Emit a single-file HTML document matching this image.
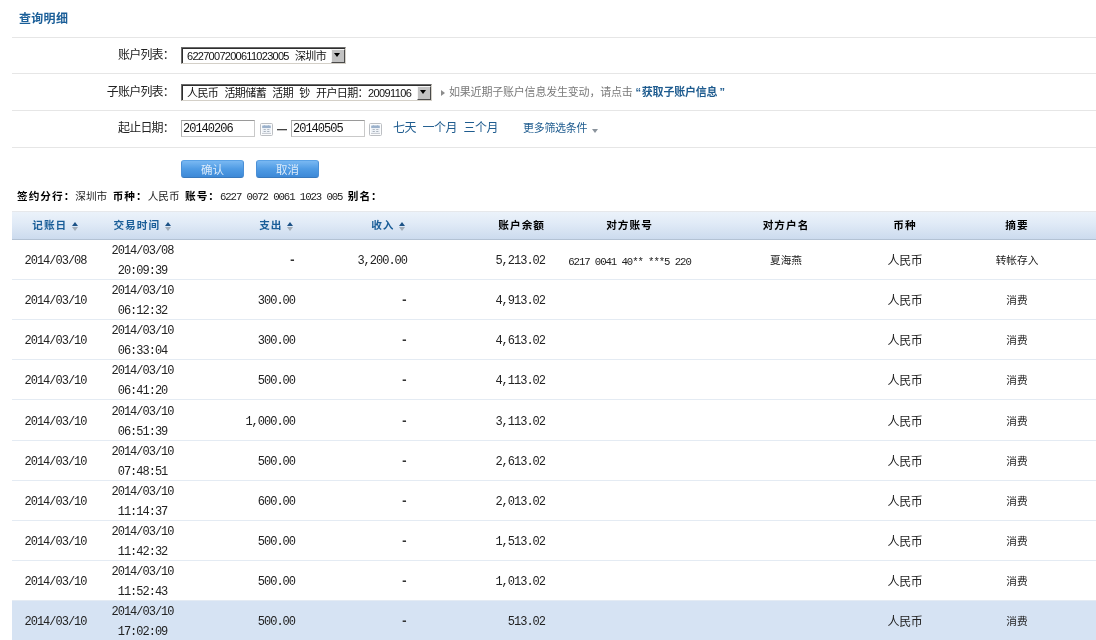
<!DOCTYPE html>
<html lang="zh-CN">
<head>
<meta charset="utf-8">
<title>查询明细</title>
<style>
html,body{margin:0;padding:0;background:#fff;}
body{will-change:transform;width:1096px;height:640px;overflow:hidden;position:relative;
  font-family:"Liberation Sans","Noto Sans CJK SC",sans-serif;font-size:12px;color:#222;}
.abs{position:absolute;white-space:nowrap;}
h1.title{position:absolute;left:19px;top:10px;letter-spacing:0.3px;margin:0;font-size:12px;line-height:18px;font-weight:bold;color:#1a5e98;}
.hr{position:absolute;left:12px;right:0;height:1px;background:#e6e6e6;}
.lbl{position:absolute;left:60px;width:114px;text-align:right;font-size:12px;line-height:18px;color:#222;letter-spacing:-0.8px;}
.sel{position:absolute;box-sizing:border-box;height:17px;background:#fff;
  border:1px solid;border-color:#6a6a6a #d4d0c8 #d4d0c8 #6a6a6a;}
.sel .in{position:absolute;left:0;top:0;right:0;bottom:0;border:0 solid #2e2e2e;border-width:1px 0 0 1px;}
.sel .tx{position:absolute;left:4px;top:0;line-height:14px;font-size:11px;color:#111;white-space:nowrap;letter-spacing:-0.65px;word-spacing:2.5px;}
.sel .btn{position:absolute;right:0;top:0;bottom:0;width:14px;box-sizing:border-box;background:#c2c2c2;
  border:1px solid;border-color:#f6f6f6 #4a4a4a #4a4a4a #f6f6f6;}
.sel .btn:after{content:"";position:absolute;left:2px;top:3px;border:3.5px solid transparent;border-top:4px solid #000;border-bottom:0;}
input.dt{position:absolute;box-sizing:border-box;width:74px;height:17px;top:120px;margin:0;padding:0 0 0 1px;
  border:1px solid;border-color:#9a9a9a #c9c9c9 #c9c9c9 #b0b0b0;background:#fff;outline:0;
  font-family:"Liberation Mono",monospace;font-size:12px;letter-spacing:-1px;color:#111;line-height:15px;}
.cal{position:absolute;top:123px;width:13px;height:13px;}
a{color:#1f5c8f;text-decoration:none;}
.btnb{position:absolute;top:160px;width:63px;height:18px;box-sizing:border-box;border:1px solid #4a90d6;border-radius:3px;
  background:linear-gradient(#79b8f2,#4f9be4 50%,#3d89d7);color:#dcebfa;font-size:11.5px;line-height:16px;text-align:center;
  padding:0.5px 0 0 0;border-color:#5aa2e6 #4a8fd6 #3878bc #4a8fd6;margin:0;font-family:inherit;}
.info{position:absolute;left:17px;top:187px;font-size:10.67px;line-height:18px;color:#222;white-space:nowrap;word-spacing:2.4px;}
.info b{color:#000;letter-spacing:1px;}
.info .n{font-family:"Liberation Mono",monospace;letter-spacing:-1.07px;word-spacing:0;}
table.grid{position:absolute;left:12px;top:211px;border-collapse:separate;border-spacing:0;table-layout:fixed;width:1200px;}
table.grid th{height:25px;padding:0 0 2px 0;background:linear-gradient(#ebf2fa,#e1ebf7 40%,#ccdbee);border-top:1px solid #e6e8eb;border-bottom:1px solid #b3c2d4;
  font-size:10.67px;font-weight:bold;letter-spacing:1px;color:#000;text-align:center;white-space:nowrap;}
table.grid th.s{color:#1a5e98;}
table.grid td{height:38px;padding:2px 0 0 0;box-shadow:inset 0 -1px 0 #e4ebf3;text-align:center;line-height:20px;
  font-family:"Liberation Mono","Noto Sans CJK SC",monospace;font-size:12px;letter-spacing:-1px;color:#222;white-space:nowrap;}
table.grid tr.t td{height:39px;}
table.grid td.tm{padding:0;height:40px;}
table.grid td.tm div{position:relative;top:1px;}
table.grid tr.t td.tm{height:41px;}
table.grid .r{text-align:right;}
table.grid td.d{font-weight:bold;color:#333;}
table.grid th.s.r{padding-right:1px;}
table.grid td.c{font-family:"Liberation Sans","Noto Sans CJK SC",sans-serif;font-size:10.67px;letter-spacing:0;padding-top:0;height:40px;}
table.grid tr.t td.c{height:41px;}
table.grid td.cy{font-size:12px;letter-spacing:-0.4px;padding-top:2px;height:38px;}
table.grid tr.t td.cy{height:39px;}
table.grid td.ac{font-size:10.67px;letter-spacing:-1.07px;padding-top:3px;height:37px;}
table.grid tr.t td.ac{height:38px;}
table.grid tr.hl td{background:#d6e3f3;box-shadow:none;}
.sort{display:inline-block;width:7px;height:9.5px;margin-left:4.5px;position:relative;vertical-align:-2px;}
.sort:before{content:"";position:absolute;left:0;top:0;border:3.5px solid transparent;border-bottom:4px solid #1c5286;border-top:0;}
.sort:after{content:"";position:absolute;left:0;top:5.5px;border:3.5px solid transparent;border-top:4px solid #a3adb8;border-bottom:0;}
</style>
</head>
<body>
<h1 class="title">查询明细</h1>
<div class="hr" style="top:37px"></div>
<div class="hr" style="top:73px"></div>
<div class="hr" style="top:110px"></div>
<div class="hr" style="top:147px"></div>

<label class="lbl" style="top:46px">账户列表：</label>
<div class="sel" style="left:181px;top:47px;width:165px"><div class="in"><span class="tx" style="letter-spacing:-0.72px;word-spacing:4px">6227007200611023005 深圳市</span><span class="btn"></span></div></div>

<label class="lbl" style="top:83px">子账户列表：</label>
<div class="sel" style="left:181px;top:83.5px;width:251px"><div class="in"><span class="tx" style="letter-spacing:-0.6px;word-spacing:3.8px">人民币 活期储蓄 活期 钞 开户日期：20091106</span><span class="btn"></span></div></div>
<div class="abs" style="left:441px;top:83px;font-size:11px;line-height:18px;color:#7a7a7a;letter-spacing:-0.2px"><span style="display:inline-block;width:0;height:0;border:3px solid transparent;border-left:4px solid #8c8c8c;border-right:0;margin-right:4px;vertical-align:0px"></span>如果近期子账户信息发生变动，请点击 <a href="#" style="font-weight:bold">“<span style="margin:0 2px 0 1px">获取子账户信息</span>”</a></div>

<label class="lbl" style="top:119px">起止日期：</label>
<input class="dt" style="left:181px" type="text" value="20140206">
<svg class="cal" style="left:260px" viewBox="0 0 13 13"><rect x="0.5" y="0.5" width="12" height="12" rx="1" fill="#eef2f7" stroke="#bcbfc3"/><rect x="1.5" y="1.5" width="10" height="10" fill="none" stroke="#fbfcfd"/><path d="M2.2 5 V3.4 Q2.2 2.6 3 2.6 H4 L4.6 1.9 L5.2 2.6 H7.8 L8.4 1.9 L9 2.6 H10 Q10.8 2.6 10.8 3.4 V5 Z" fill="#9bb1cb"/><rect x="3.6" y="6.1" width="2.2" height="0.9" fill="#aab3bd"/><rect x="7.2" y="6.1" width="2.2" height="0.9" fill="#aab3bd"/><rect x="3.6" y="8.1" width="2.2" height="0.9" fill="#a2acb7"/><rect x="7.2" y="8.1" width="2.2" height="0.9" fill="#a2acb7"/><rect x="2" y="10.1" width="9" height="0.9" fill="#c3c8ce"/></svg>
<div class="abs" style="left:277px;top:129px;width:9.5px;height:1px;background:#444;box-shadow:0 1px 0 #c4c4c4"></div>
<input class="dt" style="left:291px" type="text" value="20140505">
<svg class="cal" style="left:369px" viewBox="0 0 13 13"><rect x="0.5" y="0.5" width="12" height="12" rx="1" fill="#eef2f7" stroke="#bcbfc3"/><rect x="1.5" y="1.5" width="10" height="10" fill="none" stroke="#fbfcfd"/><path d="M2.2 5 V3.4 Q2.2 2.6 3 2.6 H4 L4.6 1.9 L5.2 2.6 H7.8 L8.4 1.9 L9 2.6 H10 Q10.8 2.6 10.8 3.4 V5 Z" fill="#9bb1cb"/><rect x="3.6" y="6.1" width="2.2" height="0.9" fill="#aab3bd"/><rect x="7.2" y="6.1" width="2.2" height="0.9" fill="#aab3bd"/><rect x="3.6" y="8.1" width="2.2" height="0.9" fill="#a2acb7"/><rect x="7.2" y="8.1" width="2.2" height="0.9" fill="#a2acb7"/><rect x="2" y="10.1" width="9" height="0.9" fill="#c3c8ce"/></svg>
<div class="abs" style="left:393px;top:119px;line-height:18px;font-size:12px;letter-spacing:-0.5px;word-spacing:3.6px"><a href="#">七天</a> <a href="#">一个月</a> <a href="#">三个月</a></div>
<div class="abs" style="left:523px;top:119px;line-height:18px;font-size:11px;letter-spacing:-0.3px"><a href="#">更多筛选条件</a><span style="display:inline-block;margin-left:5px;border:3.5px solid transparent;border-top:4px solid #8a939c;border-bottom:0;vertical-align:-0.5px"></span></div>

<button class="btnb" style="left:181px" type="button">确认</button>
<button class="btnb" style="left:256px" type="button">取消</button>

<div class="info"><b>签约分行：</b>深圳市 <b>币种：</b>人民币 <b>账号：</b><span class="n">6227 0072 0061 1023 005 </span><b>别名：</b></div>

<table class="grid">
<colgroup><col style="width:87px"><col style="width:87px"><col style="width:109px"><col style="width:112px"><col style="width:138px"><col style="width:169px"><col style="width:144px"><col style="width:94px"><col style="width:130px"><col></colgroup>
<thead><tr>
<th class="s">记账日<i class="sort"></i></th><th class="s">交易时间<i class="sort"></i></th><th class="s r">支出<i class="sort"></i></th><th class="s r">收入<i class="sort"></i></th><th class="r">账户余额</th><th>对方账号</th><th>对方户名</th><th>币种</th><th>摘要</th><th></th>
</tr></thead>
<tbody>
<tr><td>2014/03/08</td><td class="tm"><div>2014/03/08<br>20:09:39</div></td><td class="r d">-</td><td class="r">3,200.00</td><td class="r">5,213.02</td><td class="ac">6217 0041 40** ***5 220</td><td class="c">夏海燕</td><td class="c cy">人民币</td><td class="c">转帐存入</td><td></td></tr>
<tr><td>2014/03/10</td><td class="tm"><div>2014/03/10<br>06:12:32</div></td><td class="r">300.00</td><td class="r d">-</td><td class="r">4,913.02</td><td class="ac"></td><td class="c"></td><td class="c cy">人民币</td><td class="c">消费</td><td></td></tr>
<tr><td>2014/03/10</td><td class="tm"><div>2014/03/10<br>06:33:04</div></td><td class="r">300.00</td><td class="r d">-</td><td class="r">4,613.02</td><td class="ac"></td><td class="c"></td><td class="c cy">人民币</td><td class="c">消费</td><td></td></tr>
<tr><td>2014/03/10</td><td class="tm"><div>2014/03/10<br>06:41:20</div></td><td class="r">500.00</td><td class="r d">-</td><td class="r">4,113.02</td><td class="ac"></td><td class="c"></td><td class="c cy">人民币</td><td class="c">消费</td><td></td></tr>
<tr class="t"><td>2014/03/10</td><td class="tm"><div>2014/03/10<br>06:51:39</div></td><td class="r">1,000.00</td><td class="r d">-</td><td class="r">3,113.02</td><td class="ac"></td><td class="c"></td><td class="c cy">人民币</td><td class="c">消费</td><td></td></tr>
<tr><td>2014/03/10</td><td class="tm"><div>2014/03/10<br>07:48:51</div></td><td class="r">500.00</td><td class="r d">-</td><td class="r">2,613.02</td><td class="ac"></td><td class="c"></td><td class="c cy">人民币</td><td class="c">消费</td><td></td></tr>
<tr><td>2014/03/10</td><td class="tm"><div>2014/03/10<br>11:14:37</div></td><td class="r">600.00</td><td class="r d">-</td><td class="r">2,013.02</td><td class="ac"></td><td class="c"></td><td class="c cy">人民币</td><td class="c">消费</td><td></td></tr>
<tr><td>2014/03/10</td><td class="tm"><div>2014/03/10<br>11:42:32</div></td><td class="r">500.00</td><td class="r d">-</td><td class="r">1,513.02</td><td class="ac"></td><td class="c"></td><td class="c cy">人民币</td><td class="c">消费</td><td></td></tr>
<tr><td>2014/03/10</td><td class="tm"><div>2014/03/10<br>11:52:43</div></td><td class="r">500.00</td><td class="r d">-</td><td class="r">1,013.02</td><td class="ac"></td><td class="c"></td><td class="c cy">人民币</td><td class="c">消费</td><td></td></tr>
<tr class="hl"><td>2014/03/10</td><td class="tm"><div>2014/03/10<br>17:02:09</div></td><td class="r">500.00</td><td class="r d">-</td><td class="r">513.02</td><td class="ac"></td><td class="c"></td><td class="c cy">人民币</td><td class="c">消费</td><td></td></tr>
</tbody>
</table>
</body>
</html>
